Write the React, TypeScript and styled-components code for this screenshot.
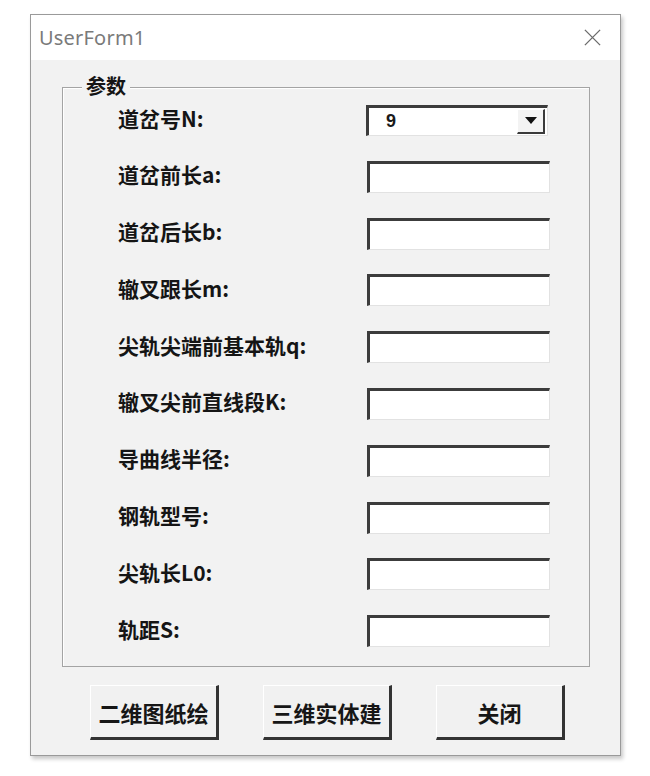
import * as React from "react";
import styled, { createGlobalStyle } from "styled-components";

type TField = {
  label: string;
  value?: string;
  select?: boolean;
};

const fields: TField[] = [
  { label: "道岔号N:", value: "9", select: true },
  { label: "道岔前长a:" },
  { label: "道岔后长b:" },
  { label: "辙叉跟长m:" },
  { label: "尖轨尖端前基本轨q:" },
  { label: "辙叉尖前直线段K:" },
  { label: "导曲线半径:" },
  { label: "钢轨型号:" },
  { label: "尖轨长L0:" },
  { label: "轨距S:" }
];

const buttons = ["二维图纸绘", "三维实体建", "关闭"];

const GlobalStyle = createGlobalStyle`
  html, body {
    margin: 0;
    padding: 0;
    background: #ffffff;
  }
  body {
    font-family: "Noto Sans", "Noto Sans CJK SC", sans-serif;
  }
  * {
    box-sizing: border-box;
  }
`;

export default function App() {
  return (
    <Page>
      <GlobalStyle />
      <Window>
        <TitleBar>
          <Title>UserForm1</Title>
          <CloseIcon viewBox="0 0 20 20">
            <path d="M2 2 L18 18 M18 2 L2 18" stroke="#6b6b6b" strokeWidth="1.4" fill="none" />
          </CloseIcon>
        </TitleBar>
        <Body>
          <Frame>
            <FrameTitle>参数</FrameTitle>
            <FieldGrid>
              {fields.map(({ label, value, select }) => (
                <React.Fragment key={label}>
                  <FieldLabel>{label}</FieldLabel>
                  {select ? (
                    <ComboBox>
                      <ComboValue>{value}</ComboValue>
                      <ComboButton>
                        <svg width="12" height="8" viewBox="0 0 12 8">
                          <path d="M0 0 H12 L6 7 Z" fill="#111" />
                        </svg>
                      </ComboButton>
                    </ComboBox>
                  ) : (
                    <TextBox />
                  )}
                </React.Fragment>
              ))}
            </FieldGrid>
          </Frame>
          <ButtonRow>
            {buttons.map((b) => (
              <CmdButton key={b}>{b}</CmdButton>
            ))}
          </ButtonRow>
        </Body>
      </Window>
    </Page>
  );
}

const Page = styled.div`
  width: 650px;
  height: 776px;
  padding: 14px 0 0 30px;
`;

const Window = styled.div`
  width: 591px;
  height: 742px;
  border: 1px solid #9a9a9a;
  background: #f2f2f2;
  display: flex;
  flex-direction: column;
  box-shadow: 2px 3px 4px rgba(0, 0, 0, 0.22);
`;

const TitleBar = styled.div`
  flex: 0 0 45px;
  background: #ffffff;
  display: flex;
  align-items: center;
  justify-content: space-between;
  padding: 0 18px 0 8px;
`;

const Title = styled.div`
  font-family: "Noto Sans", "Open Sans", sans-serif;
  font-size: 20px;
  color: #7a7a7a;
  letter-spacing: 0.2px;
`;

const CloseIcon = styled.svg`
  width: 19px;
  height: 19px;
`;

const Body = styled.div`
  flex: auto;
  padding: 27px 0 0 31px;
`;

const Frame = styled.div`
  width: 528px;
  height: 580px;
  border: 1px solid #a4a4a4;
  box-shadow: inset 1px 1px 0 #ffffff;
`;

const FrameTitle = styled.div`
  width: fit-content;
  margin: -10px 0 0 19px;
  padding: 0 4px;
  height: 16px;
  line-height: 16px;
  background: #f2f2f2;
  font-family: "Noto Sans CJK SC", sans-serif;
  font-weight: 700;
  font-size: 20px;
  color: #151515;
`;

const FieldGrid = styled.div`
  display: grid;
  grid-template-columns: 249px 183px;
  grid-auto-rows: 52px;
  row-gap: 4.8px;
  padding-left: 55px;
  align-items: center;
`;

const FieldLabel = styled.div`
  font-family: "Noto Sans CJK SC", sans-serif;
  font-weight: 700;
  font-size: 21px;
  line-height: 24px;
  color: #151515;
  margin-top: -5px;
  white-space: nowrap;
`;

const TextBox = styled.div`
  height: 32px;
  background: #ffffff;
  border-top: 3px solid #3c3c3c;
  border-left: 3px solid #3c3c3c;
  border-right: 1px solid #e2e2e2;
  border-bottom: 1px solid #e2e2e2;
`;

const ComboBox = styled(TextBox)`
  height: 31px;
  width: 182px;
  margin-left: -1px;
  display: flex;
  align-items: center;
  justify-content: space-between;
  padding: 0 2px 0 17px;
`;

const ComboValue = styled.span`
  font-family: "Liberation Sans", sans-serif;
  font-weight: 700;
  font-size: 18px;
  color: #1a1a1a;
`;

const ComboButton = styled.div`
  width: 28px;
  height: 25px;
  display: flex;
  align-items: center;
  justify-content: center;
  background: #f3f3f3;
  border-right: 2px solid #3a3a3a;
  border-bottom: 2px solid #3a3a3a;
  border-top: 1px solid #ffffff;
  border-left: 1px solid #ffffff;
`;

const ButtonRow = styled.div`
  display: flex;
  gap: 44px;
  padding: 18px 0 0 28px;
`;

const CmdButton = styled.div`
  width: 129px;
  height: 55px;
  display: flex;
  align-items: center;
  justify-content: center;
  background: #f1f1f1;
  border-top: 1px solid #ffffff;
  border-left: 1px solid #ffffff;
  border-right: 3px solid #333333;
  border-bottom: 3px solid #333333;
  font-family: "Noto Sans CJK SC", sans-serif;
  font-weight: 700;
  font-size: 22px;
  color: #161616;
`;
